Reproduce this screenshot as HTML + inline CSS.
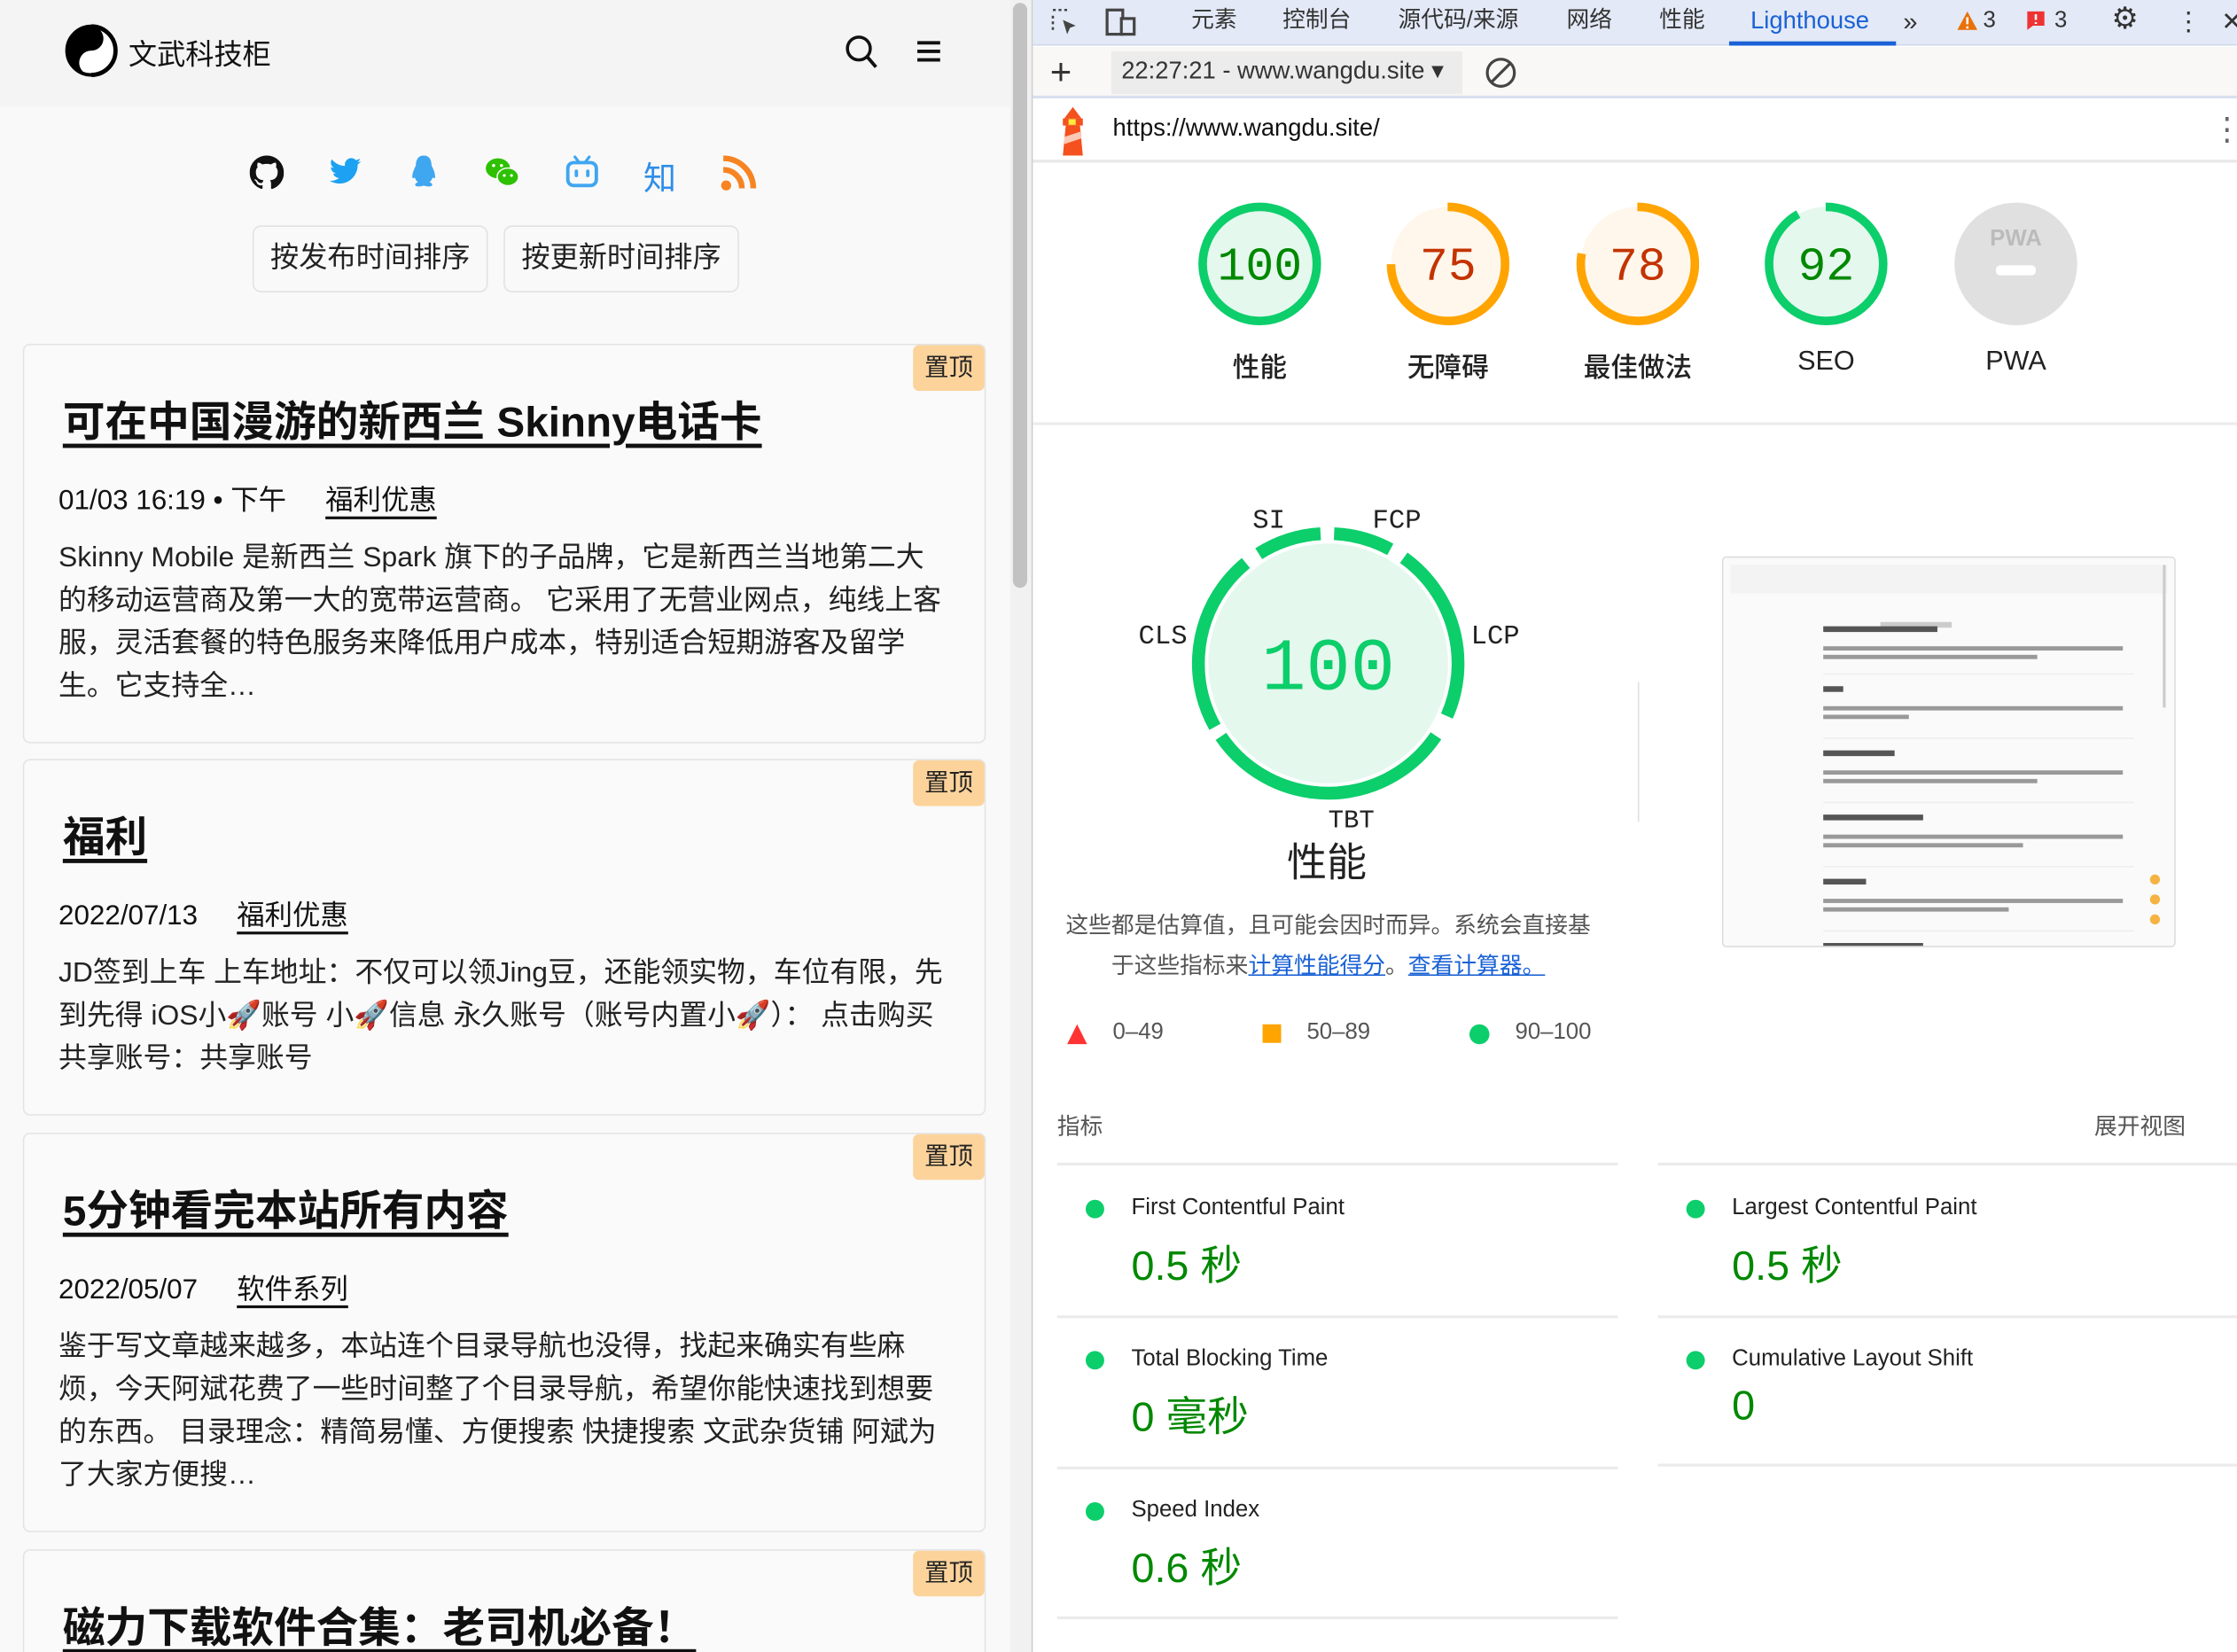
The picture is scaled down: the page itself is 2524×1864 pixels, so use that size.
<!DOCTYPE html>
<html><head><meta charset="utf-8">
<style>
*{margin:0;padding:0;box-sizing:border-box}
html,body{width:2524px;height:1864px;overflow:hidden;background:#fff}
#s{position:absolute;left:0;top:0;width:1568px;height:1158px;transform:scale(1.60969);transform-origin:0 0;font-family:"Liberation Sans","Noto Sans CJK SC",sans-serif;color:#222}
.a{position:absolute}
.left{left:0;top:0;width:708px;height:1158px;background:#f9f9f9;overflow:hidden}
.hdr{left:0;top:0;width:708px;height:75px;background:#f4f4f5}
.card{position:absolute;left:16px;width:675px;background:#fafafa;border:1px solid #e4e4e4;border-radius:5px}
.badge{position:absolute;right:0;top:0;width:50px;height:32px;background:#fcd39b;border-radius:4px;font-size:17px;line-height:32px;text-align:center;color:#222}
.t{position:absolute;left:27px;font-size:29.6px;font-weight:bold;color:#111;text-decoration:underline;text-decoration-thickness:3px;text-underline-offset:5px;white-space:nowrap}
.d{position:absolute;left:24px;font-size:19.5px;white-space:nowrap;color:#111}
.d u{margin-left:22px;text-decoration-thickness:2px;text-underline-offset:5px}
.b{position:absolute;left:24px;font-size:19.8px;line-height:30px;white-space:nowrap;color:#222}
.btn{position:absolute;top:158px;height:47px;border:1px solid #e2e2e2;border-radius:6px;background:#f9f9f9;font-size:20px;line-height:45px;text-align:center}
.tab{position:absolute;top:0;font-size:16px;line-height:30px;color:#333}
.sc{position:absolute;top:140px;width:90px;height:90px}
.lbl{position:absolute;top:243px;width:120px;text-align:center;font-size:19px;color:#222;font-weight:500}
.ml{position:absolute;font-size:16px;color:#222}
.mv{position:absolute;font-size:29px;color:#080}
.dot{position:absolute;width:13px;height:13px;border-radius:50%;background:#0cce6b}
.hl{position:absolute;height:2px;background:#ebebeb}
</style></head><body><div id="s">
<div class="a left">
 <div class="a hdr"></div>
 <svg class="a" style="left:45px;top:16px" width="38" height="39" viewBox="0 0 38 39"><circle cx="19" cy="19.5" r="17" fill="#fff" stroke="#000" stroke-width="2.5"/><path d="M19 2.5A17 17 0 0 0 19 36.5A8.5 8.5 0 0 1 19 19.5A8.5 8.5 0 0 0 19 2.5Z" fill="#000"/><path d="M19 2.5A17 17 0 0 1 19 36.5" fill="none" stroke="#000" stroke-width="3"/><circle cx="19" cy="11" r="3" fill="#000"/><circle cx="19" cy="28" r="3" fill="#fff"/></svg>
 <div class="a" style="left:90px;top:22px;font-size:20px;color:#111">文武科技柜</div>
 <svg class="a" style="left:592px;top:24px" width="24" height="26" viewBox="0 0 24 26"><circle cx="10" cy="10" r="8" fill="none" stroke="#111" stroke-width="2.2"/><path d="M16 16l6 7" stroke="#111" stroke-width="2.4"/></svg>
 <svg class="a" style="left:642px;top:28px" width="18" height="16"><path d="M1 2h16M1 8h16M1 14h16" stroke="#111" stroke-width="2.4"/></svg>
 <svg class="a" style="left:175px;top:108px" width="24" height="26" viewBox="0 0 16 16"><path fill="#111" d="M8 0C3.580 0 0 3.58 0 8c0 3.54 2.29 6.53 5.47 7.59.4.07.55-.17.55-.38v-1.33c-2.23.48-2.7-1.07-2.7-1.07-.36-.92-.89-1.170-.89-1.17-.73-.5.05-.49.05-.49.8.06 1.23.83 1.23.83.72 1.23 1.87.87 2.33.66.07-.52.28-.87.5-1.07-1.78-.2-3.64-.89-3.64-3.95 0-.87.31-1.59.82-2.15-.08-.2-.36-1.02.08-2.12 0 0 .67-.21 2.2.82a7.6 7.6 0 0 1 4 0c1.53-1.04 2.2-.82 2.2-.82.44 1.1.16 1.92.08 2.12.51.56.82 1.27.82 2.15 0 3.07-1.87 3.75-3.65 3.95.29.25.54.73.54 1.48v2.2c0 .21.15.46.55.38A8 8 0 0 0 16 8c0-4.42-3.58-8-8-8z"/></svg>
 <svg class="a" style="left:231px;top:110px" width="22" height="20" viewBox="0 0 24 20"><path fill="#1da1f2" d="M24 2.4a9.8 9.8 0 0 1-2.8.8A4.9 4.9 0 0 0 23.3.4a9.9 9.9 0 0 1-3.1 1.2A4.9 4.9 0 0 0 11.8 6 14 14 0 0 1 1.7.9a4.9 4.9 0 0 0 1.5 6.6A4.9 4.9 0 0 1 1 6.9a4.9 4.9 0 0 0 3.9 4.8 4.9 4.9 0 0 1-2.2.1 4.9 4.9 0 0 0 4.6 3.4A9.9 9.9 0 0 1 0 17.3 14 14 0 0 0 7.5 19.5c9 0 14-7.5 14-14v-.6A10 10 0 0 0 24 2.4z"/></svg>
 <svg class="a" style="left:288px;top:108px" width="18" height="24" viewBox="0 0 18 24"><path fill="#3fa6f0" d="M9 1C4.5 1 3.5 5 3.5 8c-1 2-2.5 5-2.5 8 0 1 .8 1.3 1.7.3.4 1.4 1.3 2.6 2.3 3.4-1.5.6-2 1.3-2 1.8 0 1.5 4 1.5 6 .6 2 .9 6 .9 6-.6 0-.5-.5-1.2-2-1.8 1-.8 1.9-2 2.3-3.4.9 1 1.7.7 1.7-.3 0-3-1.5-6-2.5-8C14.5 5 13.5 1 9 1z"/></svg>
 <svg class="a" style="left:340px;top:110px" width="24" height="22" viewBox="0 0 24 22"><ellipse cx="9" cy="8" rx="8.5" ry="7" fill="#2dc100"/><ellipse cx="16" cy="14" rx="7.5" ry="6.2" fill="#2dc100" stroke="#f9f9f9" stroke-width="1"/><circle cx="6" cy="6" r="1.1" fill="#fff"/><circle cx="11.5" cy="6" r="1.1" fill="#fff"/><circle cx="13.5" cy="13" r="1" fill="#fff"/><circle cx="18.5" cy="13" r="1" fill="#fff"/></svg>
 <svg class="a" style="left:396px;top:108px" width="24" height="24" viewBox="0 0 24 24"><path d="M7 2l3 4M17 2l-3 4" stroke="#3fa6f0" stroke-width="2" stroke-linecap="round"/><rect x="2" y="6" width="20" height="16" rx="4" fill="none" stroke="#3fa6f0" stroke-width="2.4"/><path d="M8 12v3M16 12v3" stroke="#3fa6f0" stroke-width="2.4" stroke-linecap="round"/></svg>
 <div class="a" style="left:451px;top:106px;font-size:23px;color:#2f8ee8">知</div>
 <svg class="a" style="left:505px;top:108px" width="26" height="26" viewBox="0 0 26 26"><circle cx="4" cy="22" r="3.5" fill="#f78422"/><path d="M2 11a13 13 0 0 1 13 13" fill="none" stroke="#f78422" stroke-width="4"/><path d="M2 3a21 21 0 0 1 21 21" fill="none" stroke="#f78422" stroke-width="4"/></svg>
 <div class="btn" style="left:177px;width:165px">按发布时间排序</div>
 <div class="btn" style="left:353px;width:165px">按更新时间排序</div>

 <div class="card" style="top:241px;height:280px">
  <div class="badge">置顶</div>
  <div class="t" style="top:30px">可在中国漫游的新西兰 Skinny电话卡</div>
  <div class="d" style="top:92px">01/03 16:19 • 下午 <u>福利优惠</u></div>
  <div class="b" style="top:134px">Skinny Mobile 是新西兰 Spark 旗下的子品牌，它是新西兰当地第二大<br>的移动运营商及第一大的宽带运营商。 它采用了无营业网点，纯线上客<br>服，灵活套餐的特色服务来降低用户成本，特别适合短期游客及留学<br>生。它支持全…</div>
 </div>
 <div class="card" style="top:532px;height:250px">
  <div class="badge">置顶</div>
  <div class="t" style="top:30px">福利</div>
  <div class="d" style="top:92px">2022/07/13 <u>福利优惠</u></div>
  <div class="b" style="top:134px">JD签到上车 上车地址：不仅可以领Jing豆，还能领实物，车位有限，先<br>到先得 iOS小🚀账号 小🚀信息 永久账号（账号内置小🚀）： 点击购买<br>共享账号：共享账号</div>
 </div>
 <div class="card" style="top:794px;height:280px">
  <div class="badge">置顶</div>
  <div class="t" style="top:30px">5分钟看完本站所有内容</div>
  <div class="d" style="top:92px">2022/05/07 <u>软件系列</u></div>
  <div class="b" style="top:134px">鉴于写文章越来越多，本站连个目录导航也没得，找起来确实有些麻<br>烦，今天阿斌花费了一些时间整了个目录导航，希望你能快速找到想要<br>的东西。 目录理念：精简易懂、方便搜索 快捷搜索 文武杂货铺 阿斌为<br>了大家方便搜…</div>
 </div>
 <div class="card" style="top:1086px;height:120px">
  <div class="badge">置顶</div>
  <div class="t" style="top:30px">磁力下载软件合集：老司机必备！</div>
 </div>
</div>
<div class="a" style="left:708px;top:0;width:15px;height:1158px;background:#f1f1f1"></div>
<div class="a" style="left:710px;top:2px;width:10px;height:410px;background:#c2c2c2;border-radius:5px"></div>
<div class="a" style="left:723px;top:0;width:1px;height:1158px;background:#ccc"></div>

<div class="a" style="left:724px;top:0;width:844px;height:1158px;background:#fff">
 <div class="a" style="left:0;top:0;width:844px;height:32px;background:#e3e9f6;border-bottom:1px solid #cfd8ea"></div>
 <svg class="a" style="left:12px;top:5px" width="22" height="22" viewBox="0 0 22 22"><path d="M2 2h2M6 2h2M10 2h2M2 6v2M2 10v2M2 14v2" stroke="#444" stroke-width="1.6"/><path d="M9 9l9 4-4 1.5L12 19z" fill="#444"/></svg>
 <svg class="a" style="left:50px;top:5px" width="24" height="22" viewBox="0 0 24 22"><rect x="2" y="2" width="11" height="17" fill="none" stroke="#444" stroke-width="2"/><rect x="12" y="8" width="9" height="11" fill="#e3e9f6" stroke="#444" stroke-width="2"/></svg>
 <div class="tab" style="left:111px">元素</div>
 <div class="tab" style="left:175px">控制台</div>
 <div class="tab" style="left:256px">源代码/来源</div>
 <div class="tab" style="left:374px">网络</div>
 <div class="tab" style="left:439px">性能</div>
 <div class="tab" style="left:503px;color:#1a62d6;font-size:17px">Lighthouse</div>
 <div class="a" style="left:488px;top:29px;width:117px;height:3px;background:#1a62d6"></div>
 <div class="tab" style="left:610px;font-size:18px">»</div>
 <svg class="a" style="left:647px;top:7px" width="16" height="15"><path d="M8 1L15 14H1z" fill="#e8710a"/><path d="M8 5v5M8 11.5v1.5" stroke="#fff" stroke-width="1.6"/></svg>
 <div class="tab" style="left:666px">3</div>
 <svg class="a" style="left:696px;top:7px" width="14" height="15"><path d="M1 1h12v10H5l-4 3z" fill="#e33"/><path d="M7 3v4M7 8.5v1.3" stroke="#fff" stroke-width="1.6"/></svg>
 <div class="tab" style="left:716px">3</div>
 <div class="tab" style="left:756px;font-size:21px;line-height:28px">⚙</div>
 <div class="tab" style="left:801px;font-size:18px">⋮</div>
 <div class="tab" style="left:833px;font-size:18px">✕</div>

 <div class="a" style="left:0;top:33px;width:844px;height:36px;background:#faf8f6;border-bottom:2px solid #d8e0ee"></div>
 <div class="a" style="left:12px;top:35px;font-size:26px;color:#333">+</div>
 <div class="a" style="left:55px;top:36px;width:246px;height:30px;background:#ececec"></div>
 <div class="a" style="left:62px;top:40px;font-size:17px;color:#333;white-space:nowrap">22:27:21 - www.wangdu.site ▾</div>
 <svg class="a" style="left:316px;top:39px" width="24" height="24"><circle cx="12" cy="12" r="9.5" fill="none" stroke="#444" stroke-width="2"/><path d="M5.5 18.5l13-13" stroke="#444" stroke-width="2"/></svg>

 <svg class="a" style="left:15px;top:74px" width="26" height="36" viewBox="0 0 26 36"><path d="M13 1l6 8H7z" fill="#f4511e"/><rect x="6" y="9" width="14" height="5" fill="#f4511e"/><rect x="10" y="9.5" width="5" height="4" fill="#ffeb3b"/><path d="M8 14h10l2 21H6z" fill="#f4511e"/><path d="M7 22l12-4v5L7 27z" fill="#fbc9b5"/></svg>
 <div class="a" style="left:56px;top:80px;font-size:17px;color:#111">https://www.wangdu.site/</div>
 <div class="a" style="left:826px;top:78px;font-size:22px;color:#666">⋮</div>
 <div class="a" style="left:0;top:112px;width:844px;height:2px;background:#e8e8e8"></div>

 <svg class="sc" style="left:114px" viewBox="0 0 90 90"><circle cx="45" cy="45" r="40" fill="#e5f8ee" stroke="#0cce6b" stroke-width="6"/><text x="45" y="56" text-anchor="middle" font-family="Liberation Mono,monospace" font-size="33" fill="#008800">100</text></svg>
 <svg class="sc" style="left:246px" viewBox="0 0 90 90"><circle cx="45" cy="45" r="40" fill="#fff7ec"/><circle cx="45" cy="45" r="40" fill="none" stroke="#ffa400" stroke-width="6" pathLength="100" stroke-dasharray="75 25" transform="rotate(-90 45 45)"/><text x="45" y="56" text-anchor="middle" font-family="Liberation Mono,monospace" font-size="33" fill="#c33300">75</text></svg>
 <svg class="sc" style="left:379px" viewBox="0 0 90 90"><circle cx="45" cy="45" r="40" fill="#fff7ec"/><circle cx="45" cy="45" r="40" fill="none" stroke="#ffa400" stroke-width="6" pathLength="100" stroke-dasharray="78 22" transform="rotate(-90 45 45)"/><text x="45" y="56" text-anchor="middle" font-family="Liberation Mono,monospace" font-size="33" fill="#c33300">78</text></svg>
 <svg class="sc" style="left:511px" viewBox="0 0 90 90"><circle cx="45" cy="45" r="40" fill="#e5f8ee"/><circle cx="45" cy="45" r="40" fill="none" stroke="#0cce6b" stroke-width="6" pathLength="100" stroke-dasharray="92 8" transform="rotate(-90 45 45)"/><text x="45" y="56" text-anchor="middle" font-family="Liberation Mono,monospace" font-size="33" fill="#008800">92</text></svg>
 <svg class="sc" style="left:644px" viewBox="0 0 90 90"><circle cx="45" cy="45" r="43" fill="#e0e0e0"/><text x="45" y="32" text-anchor="middle" font-family="Liberation Sans,sans-serif" font-weight="bold" font-size="16" fill="#bbb">PWA</text><rect x="31" y="46" width="28" height="7" rx="3" fill="#fff"/></svg>
 <div class="lbl" style="left:99px">性能</div>
 <div class="lbl" style="left:231px">无障碍</div>
 <div class="lbl" style="left:364px">最佳做法</div>
 <div class="lbl" style="left:496px">SEO</div>
 <div class="lbl" style="left:629px">PWA</div>
 <div class="a" style="left:0;top:296px;width:844px;height:2px;background:#ececec"></div>

 <svg class="a" style="left:107px;top:341px" width="200" height="250" viewBox="0 0 200 250"><circle cx="100" cy="124" r="84" fill="#e5f8ee"/><circle cx="100" cy="124" r="91" fill="none" stroke="#0cce6b" stroke-width="9" pathLength="360" stroke-dasharray="78 10 112 5 80 7 29 6 26 7" transform="rotate(306 100 124)"/><text x="100" y="142" text-anchor="middle" font-family="Liberation Mono,monospace" font-size="52" fill="#0cce6b">100</text></svg>
 <div class="a" style="left:154px;top:354px;font-family:'Liberation Mono',monospace;font-size:19px">SI</div>
 <div class="a" style="left:238px;top:354px;font-family:'Liberation Mono',monospace;font-size:19px">FCP</div>
 <div class="a" style="left:74px;top:435px;font-family:'Liberation Mono',monospace;font-size:19px">CLS</div>
 <div class="a" style="left:307px;top:435px;font-family:'Liberation Mono',monospace;font-size:19px">LCP</div>
 <div class="a" style="left:207px;top:566px;font-family:'Liberation Mono',monospace;font-size:18px">TBT</div>
 <div class="a" style="left:178px;top:583px;font-size:28px;color:#222">性能</div>
 <div class="a" style="left:0;top:636px;width:414px;text-align:center;font-size:16px;line-height:28px;color:#555">这些都是估算值，且可能会因时而异。系统会直接基<br>于这些指标来<u style="color:#1a62d6">计算性能得分</u>。<u style="color:#1a62d6">查看计算器。</u></div>
 <svg class="a" style="left:24px;top:718px" width="14" height="14"><path d="M7 0L14 14H0z" fill="#f33"/></svg>
 <div class="a" style="left:56px;top:715px;font-size:16px;color:#555">0–49</div>
 <div class="a" style="left:161px;top:718px;width:13px;height:13px;background:#ffa400"></div>
 <div class="a" style="left:192px;top:715px;font-size:16px;color:#555">50–89</div>
 <div class="a" style="left:306px;top:718px;width:14px;height:14px;border-radius:50%;background:#0cce6b"></div>
 <div class="a" style="left:338px;top:715px;font-size:16px;color:#555">90–100</div>
 <div class="a" style="left:424px;top:478px;width:1px;height:98px;background:#e0e0e0"></div>

 <div class="a" style="left:483px;top:390px;width:318px;height:274px;border:1px solid #ddd;border-radius:3px;background:#fafafa;overflow:hidden">
  <div class="a" style="left:5px;top:5px;width:306px;height:20px;background:#f3f3f3"></div>
  <div class="a" style="left:308px;top:5px;width:2px;height:100px;background:#ccc"></div>
  <div class="a" style="left:110px;top:45px;width:50px;height:4px;background:#ccc"></div>
  <div class="a" style="left:70px;top:44px;width:218px">
   <div style="height:34px;border-bottom:1px solid #eee"><div style="width:80px;height:4px;background:#555;margin-top:4px"></div><div style="width:210px;height:3px;background:#999;margin-top:10px"></div><div style="width:150px;height:3px;background:#999;margin-top:3px"></div></div>
   <div style="height:37px;border-bottom:1px solid #eee"><div style="width:14px;height:4px;background:#555;margin-top:8px"></div><div style="width:210px;height:3px;background:#999;margin-top:10px"></div><div style="width:60px;height:3px;background:#999;margin-top:3px"></div></div>
   <div style="height:37px;border-bottom:1px solid #eee"><div style="width:50px;height:4px;background:#555;margin-top:8px"></div><div style="width:210px;height:3px;background:#999;margin-top:10px"></div><div style="width:150px;height:3px;background:#999;margin-top:3px"></div></div>
   <div style="height:37px;border-bottom:1px solid #eee"><div style="width:70px;height:4px;background:#555;margin-top:8px"></div><div style="width:210px;height:3px;background:#999;margin-top:10px"></div><div style="width:140px;height:3px;background:#999;margin-top:3px"></div></div>
   <div style="height:37px;border-bottom:1px solid #eee"><div style="width:30px;height:4px;background:#555;margin-top:8px"></div><div style="width:210px;height:3px;background:#999;margin-top:10px"></div><div style="width:130px;height:3px;background:#999;margin-top:3px"></div></div>
   <div style="height:37px"><div style="width:70px;height:4px;background:#555;margin-top:8px"></div><div style="width:210px;height:3px;background:#999;margin-top:10px"></div><div style="width:150px;height:3px;background:#999;margin-top:3px"></div></div>
  </div>
  <div class="a" style="left:299px;top:222px;width:7px;height:7px;border-radius:50%;background:#f5b342"></div>
  <div class="a" style="left:299px;top:236px;width:7px;height:7px;border-radius:50%;background:#f5b342"></div>
  <div class="a" style="left:299px;top:250px;width:7px;height:7px;border-radius:50%;background:#f5b342"></div>
 </div>

 <div class="a" style="left:17px;top:776px;font-size:16px;color:#555">指标</div>
 <div class="a" style="left:744px;top:776px;font-size:16px;color:#555">展开视图</div>
 <div class="hl" style="left:17px;top:815px;width:393px"></div>
 <div class="hl" style="left:438px;top:815px;width:406px"></div>
 <div class="dot" style="left:37px;top:841px"></div><div class="ml" style="left:69px;top:838px">First Contentful Paint</div><div class="mv" style="left:69px;top:864px">0.5 秒</div>
 <div class="dot" style="left:458px;top:841px"></div><div class="ml" style="left:490px;top:838px">Largest Contentful Paint</div><div class="mv" style="left:490px;top:864px">0.5 秒</div>
 <div class="hl" style="left:17px;top:922px;width:393px"></div>
 <div class="hl" style="left:438px;top:922px;width:406px"></div>
 <div class="dot" style="left:37px;top:947px"></div><div class="ml" style="left:69px;top:944px">Total Blocking Time</div><div class="mv" style="left:69px;top:970px">0 毫秒</div>
 <div class="dot" style="left:458px;top:947px"></div><div class="ml" style="left:490px;top:944px">Cumulative Layout Shift</div><div class="mv" style="left:490px;top:970px">0</div>
 <div class="hl" style="left:17px;top:1028px;width:393px"></div>
 <div class="hl" style="left:438px;top:1026px;width:406px"></div>
 <div class="dot" style="left:37px;top:1053px"></div><div class="ml" style="left:69px;top:1050px">Speed Index</div><div class="mv" style="left:69px;top:1076px">0.6 秒</div>
 <div class="hl" style="left:17px;top:1133px;width:393px"></div>
</div>
</div></body></html>
